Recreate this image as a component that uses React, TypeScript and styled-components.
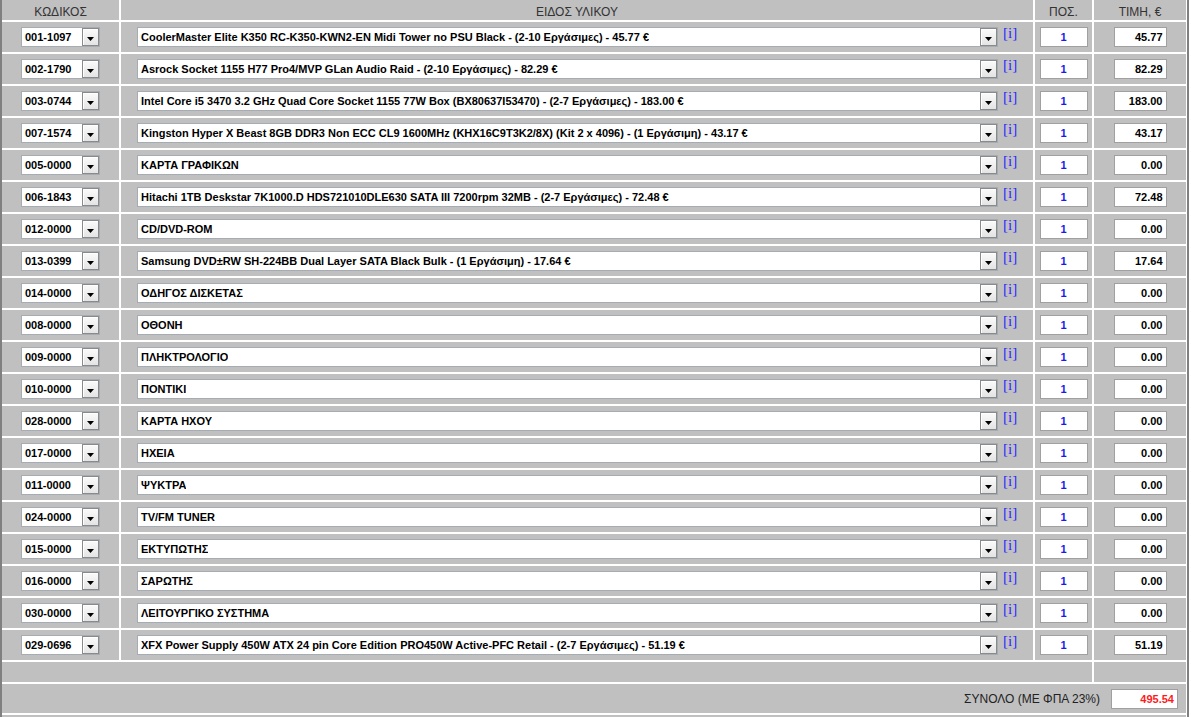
import React from "react";
import styled, { createGlobalStyle } from "styled-components";

const Global = createGlobalStyle`
  html, body { margin: 0; padding: 0; background: #ffffff; }
  body { font-family: "Liberation Sans", Arial, sans-serif; overflow: hidden; }
`;

const Frame = styled.div`
  display: flex;
  width: 1189px;
  border-left: 2px solid #808080;
  border-right: 2px solid #808080;
  box-sizing: border-box;
  background: #ffffff;
`;

const Grid = styled.div`
  display: grid;
  grid-template-columns: 117px 912px 57px 92px;
  column-gap: 2px;
  row-gap: 2px;
  background: #ffffff;
  padding-right: 1px;
`;

const Cell = styled.div<{ $span?: number; $h?: number; $align?: string }>`
  background: #c0c0c0;
  grid-column: span ${(p) => p.$span ?? 1};
  height: ${(p) => p.$h ?? 30}px;
  display: flex;
  align-items: center;
  justify-content: ${(p) => p.$align ?? "center"};
  box-sizing: border-box;
`;

const HeadText = styled.span`
  font-size: 12px;
  color: #333333;
  padding-top: 3px;
`;

const Combo = styled.div<{ $w: number }>`
  width: ${(p) => p.$w}px;
  height: 20px;
  box-sizing: border-box;
  border: 1px solid #a5acb2;
  background: #ffffff;
  display: flex;
  align-items: center;
  justify-content: space-between;
`;

const ComboText = styled.span`
  font-size: 11px;
  font-weight: bold;
  color: #000000;
  padding-left: 3px;
  white-space: nowrap;
  overflow: hidden;
`;

const DropBtn = styled.div`
  width: 17px;
  height: 18px;
  box-sizing: border-box;
  border: 1px solid #8a8a8a;
  background: linear-gradient(#fbfbfb, #e4e4e4);
  box-shadow: inset 1px 1px 0 #ffffff;
  display: flex;
  align-items: center;
  justify-content: center;
  flex-shrink: 0;
  padding-top: 3px;
`;

const Arrow = () => (
  <svg width="7" height="4" viewBox="0 0 7 4">
    <path d="M0 0 H7 L3.5 4 Z" fill="#000" />
  </svg>
);

const DescWrap = styled.div`
  display: flex;
  align-items: flex-start;
  gap: 5px;
  height: 20px;
`;

const InfoLink = styled.a`
  font-family: "Liberation Serif", "Times New Roman", serif;
  font-size: 15px;
  line-height: 13px;
  color: #2a2aff;
  text-decoration: none;
  width: 14px;
`;

const Field = styled.div<{ $w: number; $color?: string; $align?: string }>`
  width: ${(p) => p.$w}px;
  height: 20px;
  box-sizing: border-box;
  border: 1px solid #a0a0a0;
  background: #ffffff;
  font-size: 11px;
  font-weight: bold;
  color: ${(p) => p.$color ?? "#000"};
  display: flex;
  align-items: center;
  justify-content: ${(p) => p.$align ?? "center"};
  padding: 0 3px;
`;

const TotalLabel = styled.span`
  font-size: 12px;
  color: #222222;
  margin-right: 11px;
`;

const TotalCell = styled(Cell)`
  padding-right: 8px;
`;

const rows: [string, string, string][] = [
  ["001-1097", "CoolerMaster Elite K350 RC-K350-KWN2-EN Midi Tower no PSU Black - (2-10 Εργάσιμες) - 45.77 €", "45.77"],
  ["002-1790", "Asrock Socket 1155 H77 Pro4/MVP GLan Audio Raid - (2-10 Εργάσιμες) - 82.29 €", "82.29"],
  ["003-0744", "Intel Core i5 3470 3.2 GHz Quad Core Socket 1155 77W Box (BX80637I53470) - (2-7 Εργάσιμες) - 183.00 €", "183.00"],
  ["007-1574", "Kingston Hyper X Beast 8GB DDR3 Non ECC CL9 1600MHz (KHX16C9T3K2/8X) (Kit 2 x 4096) - (1 Εργάσιμη) - 43.17 €", "43.17"],
  ["005-0000", "ΚΑΡΤΑ ΓΡΑΦΙΚΩΝ", "0.00"],
  ["006-1843", "Hitachi 1TB Deskstar 7K1000.D HDS721010DLE630 SATA III 7200rpm 32MB - (2-7 Εργάσιμες) - 72.48 €", "72.48"],
  ["012-0000", "CD/DVD-ROM", "0.00"],
  ["013-0399", "Samsung DVD±RW SH-224BB Dual Layer SATA Black Bulk - (1 Εργάσιμη) - 17.64 €", "17.64"],
  ["014-0000", "ΟΔΗΓΟΣ ΔΙΣΚΕΤΑΣ", "0.00"],
  ["008-0000", "ΟΘΟΝΗ", "0.00"],
  ["009-0000", "ΠΛΗΚΤΡΟΛΟΓΙΟ", "0.00"],
  ["010-0000", "ΠΟΝΤΙΚΙ", "0.00"],
  ["028-0000", "ΚΑΡΤΑ ΗΧΟΥ", "0.00"],
  ["017-0000", "ΗΧΕΙΑ", "0.00"],
  ["011-0000", "ΨΥΚΤΡΑ", "0.00"],
  ["024-0000", "TV/FM TUNER", "0.00"],
  ["015-0000", "ΕΚΤΥΠΩΤΗΣ", "0.00"],
  ["016-0000", "ΣΑΡΩΤΗΣ", "0.00"],
  ["030-0000", "ΛΕΙΤΟΥΡΓΙΚΟ ΣΥΣΤΗΜΑ", "0.00"],
  ["029-0696", "XFX Power Supply 450W ATX 24 pin Core Edition PRO450W Active-PFC Retail - (2-7 Εργάσιμες) - 51.19 €", "51.19"],
];

export default function App() {
  return (
    <>
      <Global />
      <Frame>
        <Grid>
          <Cell $h={20}><HeadText>ΚΩΔΙΚΟΣ</HeadText></Cell>
          <Cell $h={20}><HeadText>ΕΙΔΟΣ ΥΛΙΚΟΥ</HeadText></Cell>
          <Cell $h={20}><HeadText>ΠΟΣ.</HeadText></Cell>
          <Cell $h={20}><HeadText>ΤΙΜΗ, €</HeadText></Cell>
          {rows.map(([code, desc, price]) => (
            <React.Fragment key={code}>
              <Cell>
                <Combo $w={79}>
                  <ComboText>{code}</ComboText>
                  <DropBtn><Arrow /></DropBtn>
                </Combo>
              </Cell>
              <Cell>
                <DescWrap>
                  <Combo $w={861}>
                    <ComboText>{desc}</ComboText>
                    <DropBtn><Arrow /></DropBtn>
                  </Combo>
                  <InfoLink href="#">[i]</InfoLink>
                </DescWrap>
              </Cell>
              <Cell>
                <Field $w={48} $color="#1a1aee">1</Field>
              </Cell>
              <Cell>
                <Field $w={53} $align="flex-end">{price}</Field>
              </Cell>
            </React.Fragment>
          ))}
          <Cell $span={3} $h={20} />
          <Cell $h={20} />
          <TotalCell $span={4} $h={29} $align="flex-end">
            <TotalLabel>ΣΥΝΟΛΟ (ΜΕ ΦΠΑ 23%)</TotalLabel>
            <Field $w={67} $color="#ff1a1a" $align="flex-end">495.54</Field>
          </TotalCell>
          <Cell $span={4} $h={20} />
        </Grid>
      </Frame>
    </>
  );
}
